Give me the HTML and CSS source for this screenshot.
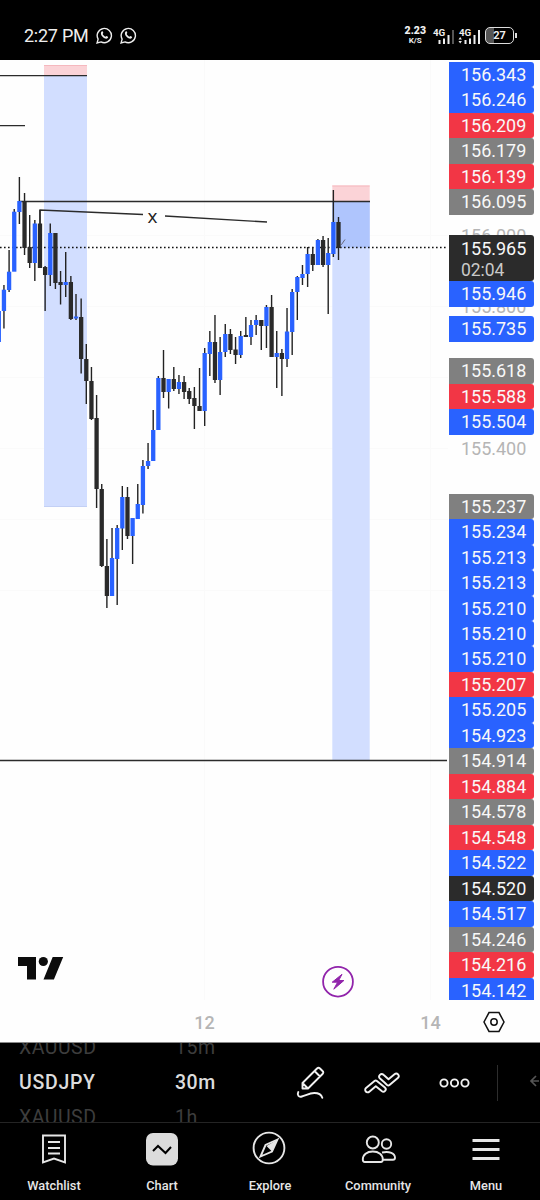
FILE: index.html
```html
<!DOCTYPE html>
<html lang="en">
<head>
    <meta charset="UTF-8">
    <meta name="viewport" content="width=device-width, initial-scale=1.0">
    <title>USDJPY 30m</title>
    <link rel="stylesheet" href="styles.css">
</head>
<body>
    <header class="status-bar">
        <span class="clock">2:27 PM</span>
        <svg class="whatsapp" viewBox="0 0 16 16"><path d="M1 15l1-3.600A6.700 6.700 0 1 1 4.700 14z"/><path class="fill" d="M5.300 4.200c.8-.6 1.200-.2 1.600 1.300l-.6 1c.6 1.200 1.400 2 2.600 2.600l.9-.7c1.500.5 2 .9 1.400 1.800-1 1.500-3.200.8-4.800-.8S3.900 5.500 5.300 4.200z"/></svg>
        <svg class="whatsapp" viewBox="0 0 16 16"><path d="M1 15l1-3.600A6.700 6.700 0 1 1 4.700 14z"/><path class="fill" d="M5.300 4.200c.8-.6 1.200-.2 1.600 1.300l-.6 1c.6 1.200 1.400 2 2.600 2.600l.9-.7c1.500.5 2 .9 1.400 1.800-1 1.500-3.200.8-4.800-.8S3.900 5.500 5.300 4.200z"/></svg>
        <div class="net-speed"><b>2.23</b><span>K/S</span></div>
        <svg class="signal" viewBox="0 0 22 18">
            <text x="0" y="9">4G</text>
            <path d="M6.500 13v4M11 11.500v5.500M15.500 8v9"/><path class="weak" d="M20 3v14"/>
        </svg>
        <svg class="signal" viewBox="0 0 22 18">
            <text x="0" y="9">4G</text>
            <path d="M6.500 13v4M11 11.500v5.500M15.500 8v9M20 3v14"/><path class="fill" d="M-.5 12.500l1.700-2.500 1.700 2.500zM-.5 14l1.700 2.500 1.700-2.500z"/>
        </svg>
        <div class="battery"><span>27</span></div>
    </header>

    <main class="chart">
        <svg class="plot" width="448" height="940" viewBox="0 60 448 940">
            <path class="grid" d="M204.500 60v940M430.500 60v940M0 235.500h448M0 306.500h448M0 377.500h448M0 448.500h448M0 519.500h448M0 590.500h448"/>
            <rect class="stop" x="44" y="65" width="43" height="10.500"/>
            <rect class="target" x="44" y="75.500" width="43" height="431.500"/>
            <rect class="stop" x="332.300" y="185.500" width="37.400" height="16"/>
            <rect class="target" x="332.300" y="201.500" width="37.400" height="558.500"/>
            <rect class="target-hit" x="332.300" y="201.500" width="37.400" height="46"/>
            <path class="edge-red" d="M44 65.500h43M332.300 186h37.400"/>
            <path class="edge-blue" d="M44 506.500h43"/>
            <path class="line" d="M0 75.600h87M0 125.600h25M20 201.500h350M0 760.500h447"/>
            <path class="line" d="M40 224v-14l103 4.500M165 216l102 6"/>
            <text class="mark" x="152.500" y="223">x</text>
            <path class="price-line" d="M0 247.500h448"/>
            <g id="candles"></g>
            <path class="tick" d="M340 243l1.500 1.500 3.500-5"/>
            <g class="logo">
                <path d="M18 957h18v22.500h-9v-13.500h-9zM52.700 957h10.500l-9.300 22.500h-10.400z"/>
                <circle cx="43.300" cy="961.500" r="4.600"/>
            </g>
            <circle class="flash-ring" cx="338" cy="981.700" r="14.900"/>
            <path class="flash" d="M342 974.300l-9.800 7.900h5.400l-3.800 7 10.100-8.700h-5.200z"/>
        </svg>

        <div class="scale">
            <div class="label blue">156.343</div>
            <div class="label blue">156.246</div>
            <div class="label red">156.209</div>
            <div class="label gray">156.179</div>
            <div class="label red">156.139</div>
            <div class="label gray">156.095</div>
            <div class="faint above">156.000</div>
            <div class="label dark current">155.965<br><span>02:04</span></div>
            <div class="label blue">155.946</div>
            <div class="faint below"><span>155.800</span></div>
            <div class="label blue">155.735</div>
            <div class="label gray space">155.618</div>
            <div class="label red">155.588</div>
            <div class="label blue">155.504</div>
            <div class="faint">155.400</div>
            <div class="label gray space-lg">155.237</div>
            <div class="label blue">155.234</div>
            <div class="label blue">155.213</div>
            <div class="label blue">155.213</div>
            <div class="label blue">155.210</div>
            <div class="label blue">155.210</div>
            <div class="label blue">155.210</div>
            <div class="label red">155.207</div>
            <div class="label blue">155.205</div>
            <div class="label blue">154.923</div>
            <div class="label gray">154.914</div>
            <div class="label red">154.884</div>
            <div class="label gray">154.578</div>
            <div class="label red">154.548</div>
            <div class="label blue">154.522</div>
            <div class="label dark">154.520</div>
            <div class="label blue">154.517</div>
            <div class="label gray">154.246</div>
            <div class="label red">154.216</div>
            <div class="label blue">154.142</div>
        </div>
    </main>

    <div class="time-axis">
        <span class="day">12</span>
        <span class="day">14</span>
        <svg class="settings" viewBox="0 0 24 24"><path d="M7 2.600h10l5 9.400-5 9.400H7L2 12z"/><circle cx="12" cy="12" r="3.200"/></svg>
    </div>

    <section class="toolbar">
        <div class="picker symbol"><span>XAUUSD</span><b>USDJPY</b><span>XAUUSD</span></div>
        <div class="picker interval"><span>15m</span><b>30m</b><span>1h</span></div>
        <div class="tools">
            <svg class="tool" viewBox="0 0 30 36"><path d="M6.500 18L21 3.500q1.500-1.500 3 0l2.500 2.500q1.500 1.500 0 3L12 23.500H6.500zM18.500 6l5.500 5.500M6.500 18l5.500 5.500M2.300 27c-1.500 3 .5 5.500 3.500 4.500 5-1.600 8-3.500 12.500-3.500 4 0 7 1.500 8 4.800"/></svg>
            <svg class="tool wide" viewBox="0 0 36 24"><path d="M2 17L10.500 10q1.200-1 2.400 0l8 6.500a2.400 2.400 0 0 1-3.200 3.600l-5.900-4.800-6.500 5.400A2.400 2.400 0 0 1 2 17z"/><path d="M20.500 11.500L16 7.500a2.500 2.500 0 0 1 3.500-3.700l5 4.400 6-5a2.500 2.500 0 0 1 3.300 3.800L25.500 14q-1.200 1-2.400 0z"/></svg>
            <svg class="tool wide" viewBox="0 0 36 24"><circle cx="7" cy="12" r="3.600"/><circle cx="17.500" cy="12" r="3.600"/><circle cx="28" cy="12" r="3.600"/></svg>
            <i class="divider"></i>
            <svg class="arrow" viewBox="0 0 10 14"><path d="M7 2L2 7l5 5M2 7h8"/></svg>
        </div>
    </section>

    <nav class="tabs">
        <a class="tab">
            <svg viewBox="0 0 36 36"><path d="M7 4.500h22v27l-11-4-11 4zM12 11h12M12 17h12M12 22.500h12"/></svg>
            Watchlist
        </a>
        <a class="tab">
            <svg viewBox="0 0 36 36"><rect class="tile" x="2" y="2" width="32" height="32.500" rx="7"/><path class="zigzag" d="M9 20l5-5 7.500 7 5.500-6"/></svg>
            Chart
        </a>
        <a class="tab">
            <svg viewBox="0 0 36 36"><circle cx="17" cy="17" r="15.400"/><path d="M25.500 8.500L13.500 14 8.500 25.500 20 20.500z"/><path class="solid" d="M25.500 8.500L14.500 15 20 20.500z"/></svg>
            Explore
        </a>
        <a class="tab">
            <svg viewBox="0 0 36 36"><circle cx="12.800" cy="11.500" r="6"/><circle cx="26.500" cy="13" r="4.700"/><path d="M12.800 20.500c-6 0-10 3.300-10 8q0 2.500 2 2.500h16q2 0 2-2.500c0-4.700-4-8-10-8zM22 21.500c7.500-1.700 13 1 13 5.200q0 2-2 2H23"/></svg>
            Community
        </a>
        <a class="tab">
            <svg viewBox="0 0 36 36"><path class="bars" d="M4.500 9.500h27M4.500 18.500h27M4.500 27.500h27"/></svg>
            Menu
        </a>
    </nav>

    <script src="script.js"></script>
</body>
</html>
```

FILE: styles.css
```css
* {
    box-sizing: border-box;
}
body {
    margin: 0;
    width: 540px;
    height: 1200px;
    overflow: hidden;
    background: #000;
    color: #e6e6e6;
    font-family: Roboto, "Liberation Sans", sans-serif;
}
svg {
    display: block;
    flex: none;
    fill: none;
}

/* status bar */
.status-bar {
    height: 60px;
    padding: 11px 26px 0 24px;
    display: flex;
    align-items: center;
    color: #eee;
}
.clock {
    font-size: 18px;
    letter-spacing: -0.25px;
    width: 72px;
    white-space: nowrap;
}
.whatsapp {
    width: 17px;
    height: 17px;
    margin-right: 7px;
    stroke: #eee;
    stroke-width: 1.3;
}
.whatsapp .fill,
.signal .fill {
    fill: #eee;
    stroke: none;
}
.net-speed {
    margin-left: auto;
    margin-right: 7px;
    display: flex;
    flex-direction: column;
    align-items: center;
    font-size: 8px;
    font-weight: 700;
    line-height: 9px;
}
.net-speed b {
    font-size: 10.5px;
    line-height: 10px;
}
.signal {
    width: 22px;
    height: 18px;
    margin-right: 4px;
    overflow: visible;
    stroke: #eee;
    stroke-width: 2;
}
.signal text {
    fill: #eee;
    stroke: none;
    font-size: 9.8px;
    font-weight: 700;
}
.signal .weak {
    stroke: #555;
}
.battery {
    position: relative;
    width: 29px;
    height: 17px;
    border: 1.5px solid #ddd;
    border-radius: 5px;
    background: linear-gradient(to right, #555 8px, transparent 8px);
    text-align: center;
    font-size: 11px;
    font-weight: 700;
    line-height: 15px;
}
.battery::after {
    content: "";
    position: absolute;
    right: -4px;
    top: 5px;
    width: 2px;
    height: 5px;
    background: #ddd;
}

/* chart */
.chart {
    height: 940px;
    display: flex;
    overflow: hidden;
    background: #fefefe;
}
.grid {
    stroke: #fafafa;
}
.stop {
    fill: #fbd3d7;
}
.target {
    fill: #d2deff;
}
.target-hit {
    fill: #afc5fd;
}
.edge-red {
    stroke: #f5b8be;
}
.edge-blue {
    stroke: #c3d0f5;
}
.line {
    stroke: #2b2b2b;
    stroke-width: 1.3;
}
.price-line {
    stroke: #111;
    stroke-width: 1.6;
    stroke-dasharray: 1.6 2.4;
}
.mark {
    fill: #222;
    font-family: "Open Sans", Roboto, sans-serif;
    font-size: 19px;
    text-anchor: middle;
}
.tick {
    stroke: #667;
}
.wick {
    stroke: #222;
    stroke-width: 1.4;
}
.up {
    fill: #2962ff;
}
.down {
    fill: #2a2a2a;
}
.logo {
    fill: #0c0c0c;
}
.flash-ring {
    stroke: #9124ab;
    stroke-width: 1.8;
}
.flash {
    fill: #9124ab;
    stroke: #9124ab;
}
.scale {
    width: 86px;
    padding: 2px 0 0 1px;
    display: flex;
    flex-direction: column;
    font-size: 18px;
    letter-spacing: -0.03px;
}
.label {
    flex: none;
    height: 25.48px;
    padding-left: 12px;
    border-radius: 0 3px 3px 0;
    line-height: 26px;
    color: #f8f8f8;
}
.blue {
    background: #2962ff;
}
.red {
    background: #f23645;
}
.gray {
    background: #808080;
}
.dark {
    background: #2b2b2b;
}
.current {
    height: 46.5px;
    line-height: 21px;
    padding-top: 3px;
}
.current span {
    color: #c9c9c9;
    font-size: 17.5px;
}
.space {
    margin-top: 16.5px;
}
.space-lg {
    margin-top: 32px;
}
.faint {
    flex: none;
    height: 27px;
    padding-left: 12px;
    line-height: 27px;
    color: #b5b5b5;
}
.faint.above {
    height: 20px;
    line-height: 41px;
    overflow: hidden;
}
.faint.below {
    height: 9.5px;
    overflow: hidden;
}
.faint.below span {
    display: block;
    margin-top: -10px;
    line-height: 20px;
}

/* time axis */
.time-axis {
    height: 43px;
    padding: 2px 33px 0 182px;
    display: flex;
    align-items: center;
    background: #fefefe;
    border-bottom: 1px solid #888;
    color: #b5b5b5;
    font-size: 18px;
    font-weight: 500;
}
.day {
    width: 45px;
    text-align: center;
}
.day + .day {
    margin-left: 181px;
}
.settings {
    width: 26px;
    height: 24px;
    margin-left: auto;
    stroke: #111;
    stroke-width: 1.5;
}

/* symbol and interval pickers */
.toolbar {
    height: 80px;
    display: flex;
    border-bottom: 1px solid #242424;
    overflow: hidden;
}
.picker {
    display: flex;
    flex-direction: column;
    margin-top: -13px;
    font-size: 19.5px;
    letter-spacing: 0.5px;
    line-height: 35px;
    color: #3d3d3d;
}
.picker b {
    color: #dcdcdc;
    font-weight: 500;
    font-size: 19.5px;
}
.symbol {
    width: 175px;
    padding-left: 19px;
}
.symbol b {
    letter-spacing: 0.7px;
}
.interval {
    width: 121px;
}
.tools {
    flex: 1;
    display: flex;
    align-items: center;
}
.tool {
    width: 30px;
    height: 36px;
    stroke: #f2f2f2;
    stroke-width: 1.9;
    stroke-linejoin: round;
    stroke-linecap: round;
}
.tool.wide {
    width: 36px;
    height: 24px;
    margin-left: 38px;
}
.tool.wide + .wide {
    margin-left: 37px;
}
.divider {
    width: 1px;
    height: 36px;
    margin-left: 24px;
    background: #2d2d2d;
}
.arrow {
    width: 10px;
    height: 14px;
    margin: 0 0 4px 31px;
    stroke: #555;
    stroke-width: 1.7;
}

/* bottom tabs */
.tabs {
    height: 77px;
    display: flex;
}
.tab {
    width: 108px;
    padding-top: 8px;
    display: flex;
    flex-direction: column;
    align-items: center;
    font-size: 12.8px;
    font-weight: 500;
    line-height: 22px;
}
.tab svg {
    width: 36px;
    height: 36px;
    margin-bottom: 8px;
    stroke: #e6e6e6;
    stroke-width: 1.9;
}
.tile {
    fill: #dcdcdc;
    stroke: none;
}
.tab .zigzag {
    stroke: #000;
    stroke-width: 2;
}
.tab .solid {
    fill: #e6e6e6;
    stroke: none;
}
.tab .bars {
    stroke-width: 2.8;
}
```

FILE: script.js
```js
// high, low, body top, body bottom, up
const candles = [
    [311, 342, 311, 342, 1], [285, 328.5, 289.7, 311, 1], [250, 292, 271.7, 290, 1],
    [209, 271, 211.7, 271.7, 1], [177, 224, 201, 212, 1], [193, 255, 201, 248, 0],
    [215, 268, 247, 263, 0], [220, 281, 223.5, 263, 1], [210, 268, 223.5, 268, 0],
    [266, 311, 267, 275, 0], [223.5, 286, 233, 275, 1], [233, 289, 233, 283, 0],
    [271, 304.5, 282, 285, 0], [252, 297, 282, 285, 1], [276, 320, 282, 319, 0],
    [294, 320, 316.5, 318.5, 1], [298.5, 373.5, 317, 359, 0], [344, 404, 359, 381, 0],
    [367, 420, 381, 419, 0], [395, 508, 418, 489, 0], [484, 567, 489, 566, 0],
    [539, 608, 566, 596, 0], [528, 596, 558, 596, 1], [525, 605, 528, 559, 1],
    [486, 550, 497, 528.5, 1], [487, 539, 497, 536, 0], [518, 564, 518, 536, 1],
    [484, 519, 504, 519, 1], [460, 513.5, 466, 505, 1], [443, 469, 461, 466, 1],
    [410, 461, 430, 461, 1], [376, 430, 378, 430, 1], [350, 398, 378, 392, 0],
    [379, 408.5, 379, 392, 1], [367, 391, 379, 389, 0], [375, 394, 382, 389, 1],
    [376, 399, 382, 392, 0], [388, 404, 391, 399, 0], [387, 429, 398, 406, 0],
    [368, 411, 406, 411, 0], [348, 426, 353, 411, 1], [331, 376, 342, 354, 1],
    [315, 383, 342, 380, 0], [337, 395, 352, 380, 1], [324, 357, 334, 352, 1],
    [329, 354, 334, 350, 0], [337, 364, 349.5, 355, 0], [331, 358, 336, 355, 1],
    [317, 337, 335, 337, 0], [320, 345, 325, 337, 1], [315, 335, 320, 325, 1],
    [320, 350, 320, 326, 0], [305, 348, 307, 326, 1], [295, 357, 307, 357, 0],
    [331, 388, 353, 357, 1], [349, 396, 353, 359, 0], [308, 367, 331.5, 359, 1],
    [289, 355, 292, 332, 1], [276, 320, 277, 292, 1], [265, 285, 274, 278, 1],
    [247, 287, 254, 274, 1], [247, 271, 254, 265, 0], [239, 265, 240, 265, 1],
    [236, 267, 240, 265, 0], [238, 314, 253, 265, 1], [190, 257, 222, 254, 1],
    [217, 260, 222, 248, 0]
];

const step = 5.147;
const bodyWidth = 4.3;
let markup = '';

candles.forEach(function([high, low, top, bottom, up], i) {
    const x = -1.2 + i * step;
    markup += `<path class="wick" d="M${x} ${high}V${low}"/>`;
    markup += `<rect class="${up ? 'up' : 'down'}" x="${x - bodyWidth / 2}" y="${top}" width="${bodyWidth}" height="${bottom - top}"/>`;
});

document.getElementById('candles').innerHTML = markup;
```
